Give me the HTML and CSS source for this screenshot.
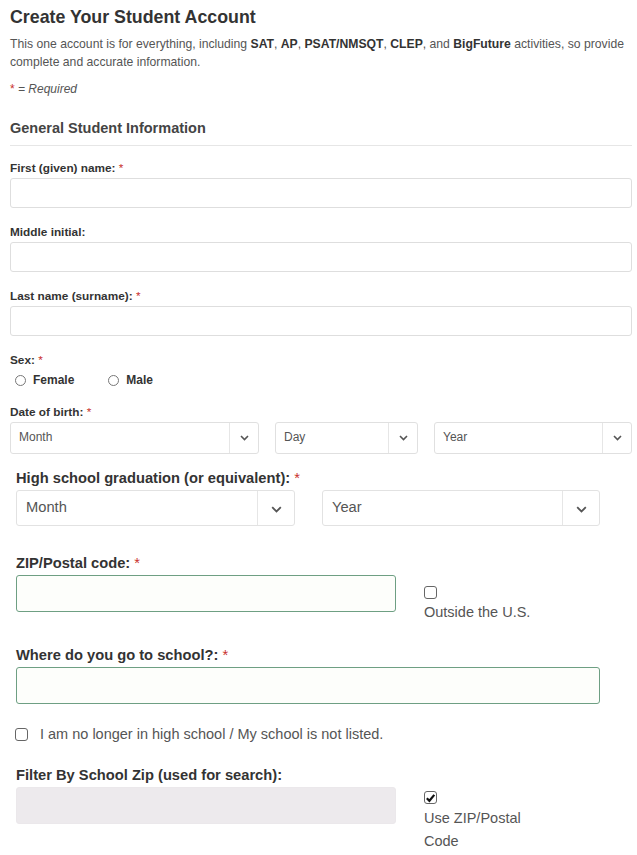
FILE: index.html
```html
<!DOCTYPE html>
<html lang="en">
<head>
<meta charset="utf-8">
<title>Create Your Student Account</title>
<link rel="stylesheet" href="styles.css">
</head>
<body>
<div class="top">
  <h1 class="title">Create Your Student Account</h1>
  <p class="intro"><span>This one account is for everything, including <b>SAT</b>, <b>AP</b>, <b>PSAT/NMSQT</b>, <b>CLEP</b>, and <b>BigFuture</b> activities, so provide</span><br><span>complete and accurate information.</span></p>
  <p class="req"><span class="ast">*</span> = Required</p>
  <h2 class="section">General Student Information</h2>

  <div class="field first">
    <div class="lbl">First (given) name: <span class="ast">*</span></div>
    <div class="input"></div>
  </div>
  <div class="field">
    <div class="lbl">Middle initial:</div>
    <div class="input"></div>
  </div>
  <div class="field">
    <div class="lbl">Last name (surname): <span class="ast">*</span></div>
    <div class="input"></div>
  </div>
  <div class="field">
    <div class="lbl">Sex: <span class="ast">*</span></div>
    <div class="radios">
      <span class="radio-item"><span class="radio"></span>Female</span>
      <span class="radio-item"><span class="radio"></span>Male</span>
    </div>
  </div>
  <div class="field">
    <div class="lbl">Date of birth: <span class="ast">*</span></div>
    <div class="dob">
      <div class="select"><span class="sel-text">Month</span><span class="sel-arrow"><svg width="9" height="6" viewBox="0 0 9 6"><path d="M1 1l3.5 3.5L8 1" fill="none" stroke="#555" stroke-width="1.6"/></svg></span></div>
      <div class="select"><span class="sel-text">Day</span><span class="sel-arrow"><svg width="9" height="6" viewBox="0 0 9 6"><path d="M1 1l3.5 3.5L8 1" fill="none" stroke="#555" stroke-width="1.6"/></svg></span></div>
      <div class="select"><span class="sel-text">Year</span><span class="sel-arrow"><svg width="9" height="6" viewBox="0 0 9 6"><path d="M1 1l3.5 3.5L8 1" fill="none" stroke="#555" stroke-width="1.6"/></svg></span></div>
    </div>
  </div>
</div>

<div class="bottom">
  <div class="bfield">
    <div class="blbl">High school graduation (or equivalent): <span class="ast">*</span></div>
    <div class="grad">
      <div class="bselect"><span class="bsel-text">Month</span><span class="bsel-arrow"><svg width="11" height="7" viewBox="0 0 11 7"><path d="M1.2 1.2l4.3 4.3 4.3-4.3" fill="none" stroke="#555" stroke-width="1.8"/></svg></span></div>
      <div class="bselect"><span class="bsel-text">Year</span><span class="bsel-arrow"><svg width="11" height="7" viewBox="0 0 11 7"><path d="M1.2 1.2l4.3 4.3 4.3-4.3" fill="none" stroke="#555" stroke-width="1.8"/></svg></span></div>
    </div>
  </div>

  <div class="bfield zip">
    <div class="blbl">ZIP/Postal code: <span class="ast">*</span></div>
    <div class="pair">
      <div class="binput focus short"></div>
      <div class="side side-zip">
        <span class="cbox"></span>
        <div class="side-text">Outside the U.S.</div>
      </div>
    </div>
  </div>

  <div class="bfield school">
    <div class="blbl">Where do you go to school?: <span class="ast">*</span></div>
    <div class="binput focus wide"></div>
  </div>

  <div class="checkline">
    <span class="cbox"></span>
    <span>I am no longer in high school / My school is not listed.</span>
  </div>

  <div class="bfield filter">
    <div class="blbl">Filter By School Zip (used for search):</div>
    <div class="pair">
      <div class="binput disabled short"></div>
      <div class="side side-filter">
        <span class="cbox checked"><svg width="11" height="10" viewBox="0 0 11 10"><path d="M1.8 5.2l2.6 2.6L9.3 1.9" fill="none" stroke="#111" stroke-width="2.2"/></svg></span>
        <div class="side-text">Use ZIP/Postal<br>Code</div>
      </div>
    </div>
  </div>
</div>
</body>
</html>
```

FILE: styles.css
```css
* { box-sizing: border-box; }

html, body {
  margin: 0;
  padding: 0;
  background: #fff;
}

body {
  font-family: "Liberation Sans", Arial, Helvetica, sans-serif;
  color: #555;
  width: 637px;
  overflow: hidden;
}

.ast { color: #c9302c; font-style: normal; font-weight: normal; }

/* ---------- top (smaller scale) ---------- */
.top {
  height: 454px;
  overflow: hidden;
  padding: 6px 5px 0 10px;
}

.title {
  margin: 0;
  font-size: 17.8px;
  line-height: 22px;
  font-weight: bold;
  color: #333;
}

.intro {
  margin: 7px 0 0;
  font-size: 12.2px;
  line-height: 18px;
  color: #555;
  white-space: nowrap;
}
.intro b { color: #333; }

.req {
  margin: 9px 0 0;
  font-size: 12px;
  line-height: 18px;
  font-style: italic;
  color: #555;
}

.section {
  margin: 20px 0 0;
  padding-bottom: 7px;
  border-bottom: 1px solid #e6e6e6;
  font-size: 14.5px;
  line-height: 20px;
  font-weight: bold;
  color: #444;
}

.field { margin-top: 16px; }
.field.first { margin-top: 14px; }

.lbl {
  font-size: 11.8px;
  line-height: 16px;
  font-weight: bold;
  color: #333;
  margin-bottom: 2px;
}

.input {
  height: 30px;
  border: 1px solid #dedede;
  border-radius: 3px;
  background: #fff;
}

.radios {
  display: flex;
  align-items: center;
  height: 16px;
  margin-top: 4px;
  padding-left: 5px;
  font-size: 12px;
  font-weight: bold;
  color: #333;
}
.radio-item { display: flex; align-items: center; }
.radio-item + .radio-item { margin-left: 34px; }
.radio {
  width: 11px;
  height: 11px;
  border: 1px solid #777;
  border-radius: 50%;
  margin-right: 7px;
}

.dob {
  display: grid;
  grid-template-columns: 249px 143px 1fr;
  column-gap: 16px;
  margin-top: 1px;
}

.select {
  display: flex;
  height: 32px;
  border: 1px solid #e0e0e0;
  border-radius: 3px;
  font-size: 12px;
  color: #555;
}
.sel-text {
  flex: 1;
  padding: 7px 0 0 8px;
}
.sel-arrow {
  width: 29px;
  border-left: 1px solid #e6e6e6;
  display: flex;
  align-items: flex-start;
  justify-content: center;
  padding-top: 12px;
}

/* ---------- bottom (larger scale) ---------- */
.bottom {
  padding: 14px 0 0 16px;
}

.blbl {
  font-size: 14.7px;
  line-height: 20px;
  font-weight: bold;
  color: #333;
  margin-bottom: 2px;
}

.grad {
  display: grid;
  grid-template-columns: 279px 278px;
  column-gap: 27px;
}

.bselect {
  display: flex;
  height: 36px;
  border: 1px solid #e2e2e2;
  border-radius: 3px;
  font-size: 14.7px;
  color: #555;
}
.bsel-text {
  flex: 1;
  padding: 8px 0 0 9px;
}
.bsel-arrow {
  width: 37px;
  border-left: 1px solid #e6e6e6;
  display: flex;
  justify-content: center;
  padding-top: 15px;
}

.bfield.zip { margin-top: 27px; }
.bfield.school { margin-top: 21px; }
.bfield.filter { margin-top: 20px; }

.pair {
  display: flex;
  align-items: flex-start;
}

.binput {
  height: 37px;
  border-radius: 3px;
}
.binput.short { width: 380px; }
.binput.wide { width: 584px; }
.binput.focus {
  border: 1.5px solid #6e9f83;
  background: #fdfefb;
}
.binput.disabled {
  border: 1px solid #ebe8eb;
  background: #edeaed;
}

.side {
  margin-left: 28px;
  width: 115px;
  font-size: 14.5px;
  line-height: 23px;
  color: #555;
  display: flex;
  flex-direction: column;
  align-items: flex-start;
}
.side-zip { padding-top: 11px; }
.side-zip .cbox { margin-bottom: 2px; }
.side-filter { padding-top: 4px; }
.side-filter .cbox { margin-bottom: 3px; }

.cbox {
  width: 13px;
  height: 13px;
  border: 1px solid #666;
  border-radius: 3px;
  display: inline-flex;
  align-items: center;
  justify-content: center;
  background: #fff;
  flex: none;
}

.checkline {
  margin-top: 19px;
  display: flex;
  align-items: center;
  height: 22px;
  font-size: 14.5px;
  color: #555;
}
.checkline .cbox {
  margin-left: -1px;
  margin-right: 12px;
}
```
